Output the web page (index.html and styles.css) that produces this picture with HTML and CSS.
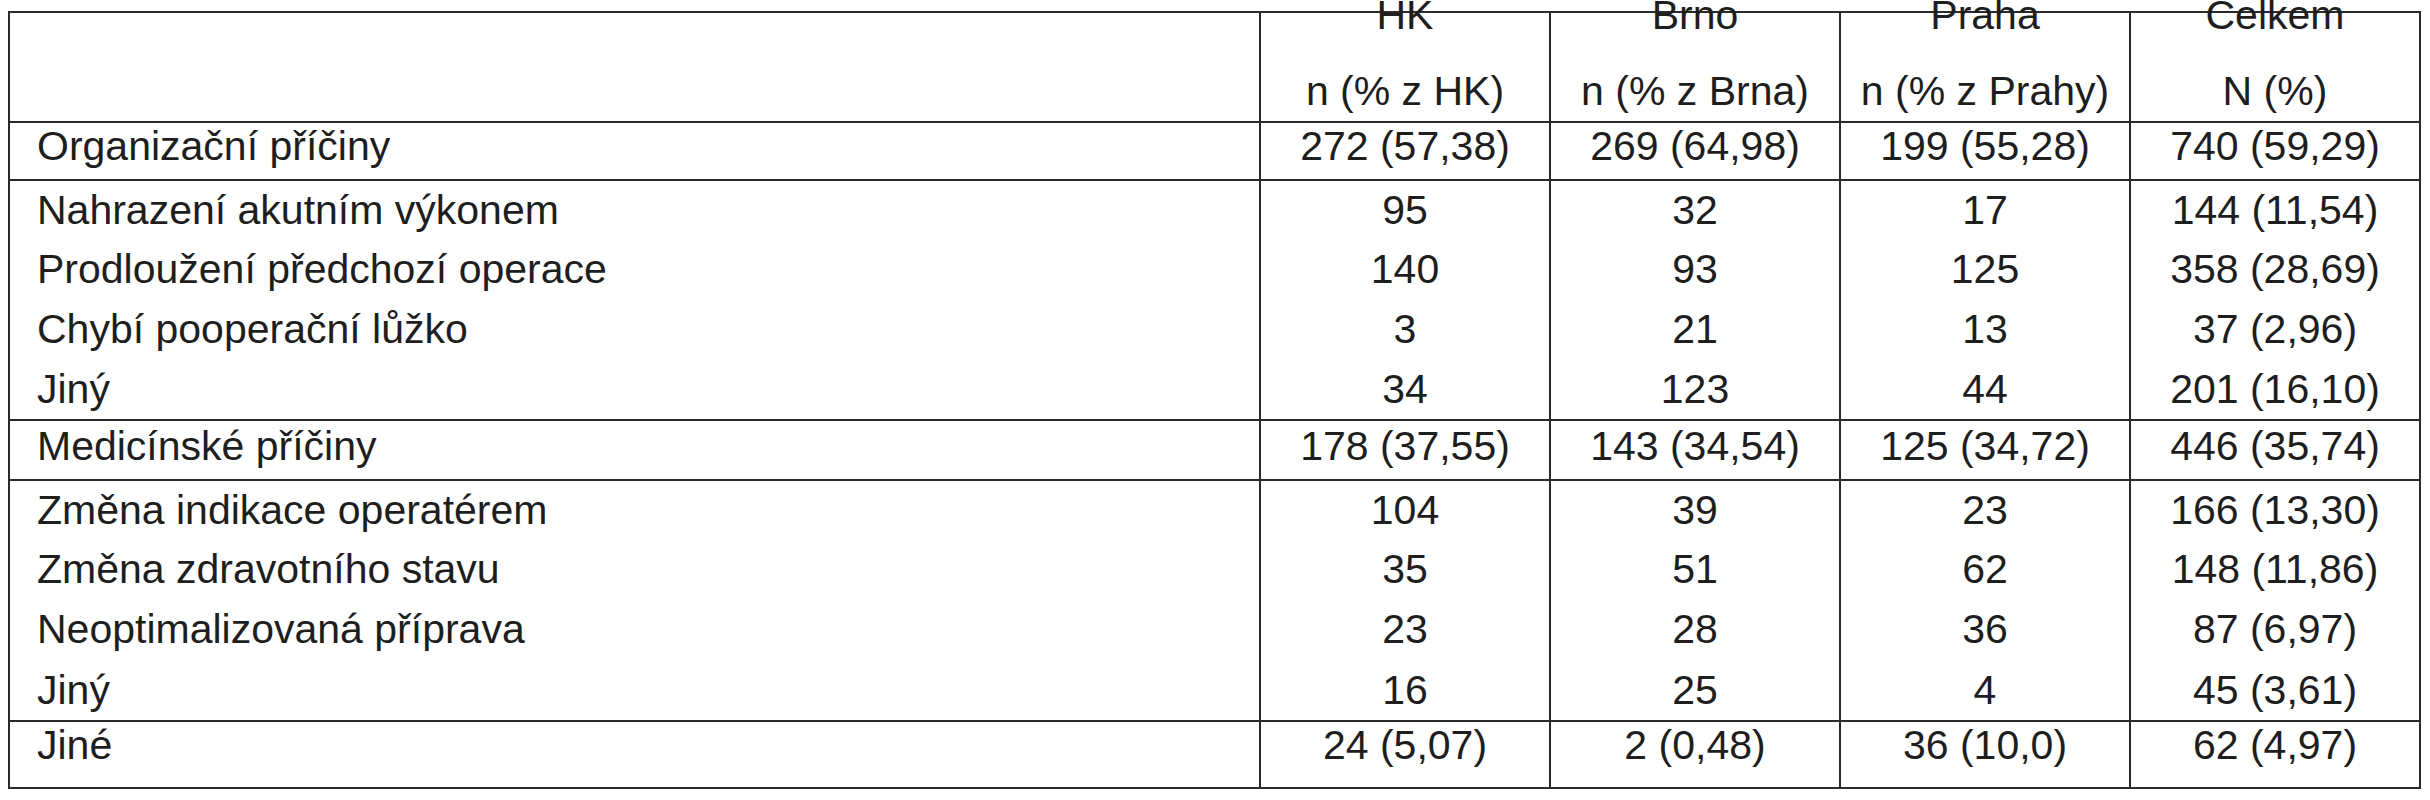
FILE: index.html
```html
<!DOCTYPE html>
<html lang="cs">
<head>
<meta charset="utf-8">
<title>Příčiny</title>
<link rel="stylesheet" href="styles.css">
</head>
<body>
<table class="tbl">
  <colgroup>
    <col class="c-label">
    <col class="c-num">
    <col class="c-num">
    <col class="c-num">
    <col class="c-num c-last">
  </colgroup>
  <thead>
    <tr class="r-head">
      <th class="lbl"></th>
      <th><span class="h1">HK</span><span class="h2">n (% z HK)</span></th>
      <th><span class="h1">Brno</span><span class="h2">n (% z Brna)</span></th>
      <th><span class="h1">Praha</span><span class="h2">n (% z Prahy)</span></th>
      <th><span class="h1">Celkem</span><span class="h2">N (%)</span></th>
    </tr>
  </thead>
  <tbody>
    <tr class="r-main r-org">
      <td class="lbl">Organizační příčiny</td><td>272 (57,38)</td><td>269 (64,98)</td><td>199 (55,28)</td><td>740 (59,29)</td>
    </tr>
    <tr class="r-sub r-first">
      <td class="lbl">Nahrazení akutním výkonem</td><td>95</td><td>32</td><td>17</td><td>144 (11,54)</td>
    </tr>
    <tr class="r-sub">
      <td class="lbl">Prodloužení předchozí operace</td><td>140</td><td>93</td><td>125</td><td>358 (28,69)</td>
    </tr>
    <tr class="r-sub">
      <td class="lbl">Chybí pooperační lůžko</td><td>3</td><td>21</td><td>13</td><td>37 (2,96)</td>
    </tr>
    <tr class="r-sub">
      <td class="lbl">Jiný</td><td>34</td><td>123</td><td>44</td><td>201 (16,10)</td>
    </tr>
    <tr class="r-main r-med">
      <td class="lbl">Medicínské příčiny</td><td>178 (37,55)</td><td>143 (34,54)</td><td>125 (34,72)</td><td>446 (35,74)</td>
    </tr>
    <tr class="r-sub r-first">
      <td class="lbl">Změna indikace operatérem</td><td>104</td><td>39</td><td>23</td><td>166 (13,30)</td>
    </tr>
    <tr class="r-sub">
      <td class="lbl">Změna zdravotního stavu</td><td>35</td><td>51</td><td>62</td><td>148 (11,86)</td>
    </tr>
    <tr class="r-sub">
      <td class="lbl">Neoptimalizovaná příprava</td><td>23</td><td>28</td><td>36</td><td>87 (6,97)</td>
    </tr>
    <tr class="r-sub r-tall">
      <td class="lbl">Jiný</td><td>16</td><td>25</td><td>4</td><td>45 (3,61)</td>
    </tr>
    <tr class="r-main r-end">
      <td class="lbl">Jiné</td><td>24 (5,07)</td><td>2 (0,48)</td><td>36 (10,0)</td><td>62 (4,97)</td>
    </tr>
  </tbody>
</table>
</body>
</html>
```
FILE: styles.css
```css
html, body {
  margin: 0;
  padding: 0;
  background: #ffffff;
}

body {
  padding: 11px 0 0 8px;
  font-family: "Liberation Sans", Arial, Helvetica, sans-serif;
  font-size: 41px;
  color: #1e1e1e;
}

.tbl {
  border-collapse: separate;
  border-spacing: 0;
  table-layout: fixed;
  width: 2412px;
  border: 2px solid #2a2a2a;
}

.c-label { width: 1249px; }
.c-num { width: 290px; }

.tbl th,
.tbl td {
  padding: 0;
  font-weight: normal;
  text-align: center;
  vertical-align: top;
  line-height: 46px;
  white-space: nowrap;
  border-left: 2px solid #2a2a2a;
}

.tbl th.lbl,
.tbl td.lbl {
  border-left: 0;
  text-align: left;
  padding-left: 27px;
}

/* header */
.r-head th {
  height: 108px;
}

.h1 {
  display: block;
  margin-top: -21px;
}

.h2 {
  display: block;
  margin-top: 30px;
}

/* main category rows */
.r-main td {
  border-top: 2px solid #2a2a2a;
}

.r-org td {
  height: 56px;
}

.r-med td {
  height: 56px;
  padding-top: 2px;
}

.r-end td {
  height: 65px;
  position: relative;
}

/* sub rows */
.r-sub td {
  height: 60px;
  vertical-align: middle;
}

.r-sub.r-first td {
  height: 58px;
  border-top: 2px solid #2a2a2a;
}

.r-sub.r-tall td {
  height: 61px;
}

/* small ticks of the column rules below the table */
.r-end td:not(.lbl)::after {
  content: "";
  position: absolute;
  left: -2px;
  bottom: -10px;
  width: 2px;
  height: 6px;
  background: #2a2a2a;
}
```
